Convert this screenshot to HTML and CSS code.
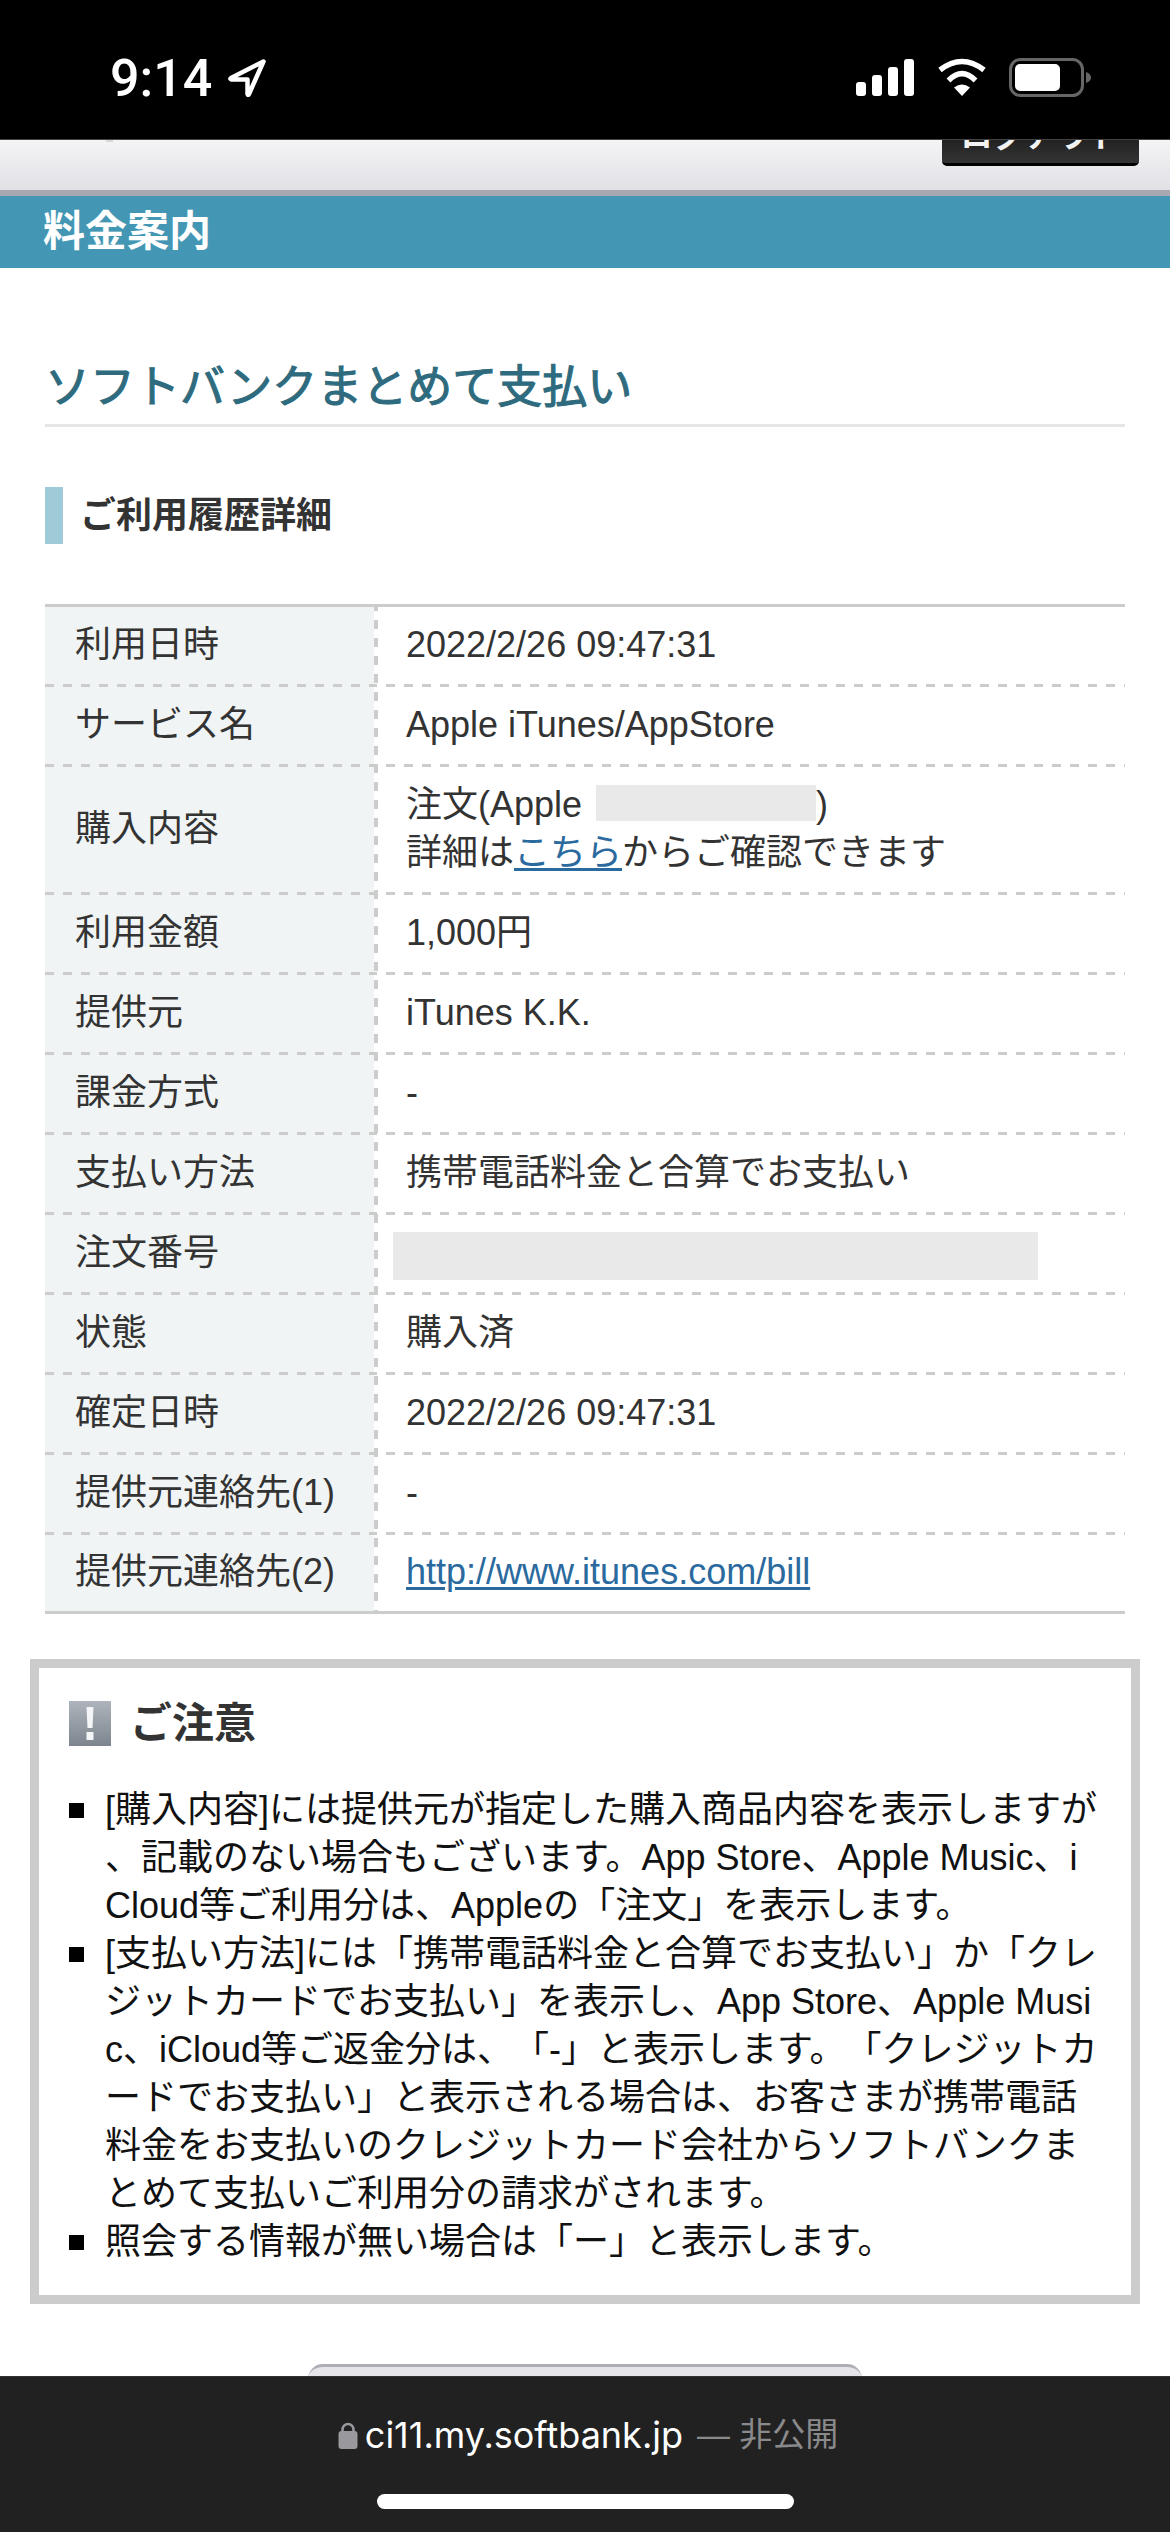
FILE: index.html
```html
<!DOCTYPE html>
<html lang="ja">
<head>
<meta charset="utf-8">
<title>料金案内</title>
<link rel="stylesheet" href="styles.css">
</head>
<body>
<div class="status">
  <div class="status-left">
    <span class="time">9:14</span>
    <svg class="loc" width="38" height="38" viewBox="0 0 38 38"><path d="M35.500 2.500 L3 19 Q1.500 20 3.500 20.500 L19.500 20.500 L19.500 35 Q20 37 21 35 Z" fill="none" stroke="#fff" stroke-width="4.500" stroke-linejoin="round"/></svg>
  </div>
  <svg class="status-icons" width="235" height="39" viewBox="0 0 235 39">
    <rect x="0" y="24" width="10" height="14" rx="3" fill="#fff"/>
    <rect x="16" y="17" width="10" height="21" rx="3" fill="#fff"/>
    <rect x="32" y="9" width="10" height="29" rx="3" fill="#fff"/>
    <rect x="48" y="1" width="10" height="37" rx="3" fill="#fff"/>
    <path d="M84 12 Q106 -5 128 12" fill="none" stroke="#fff" stroke-width="5.500"/>
    <path d="M92.500 22.500 Q106 9 119.500 22.500" fill="none" stroke="#fff" stroke-width="5.500"/>
    <path d="M106 38 L98 29.500 Q106 23.500 114 29.500 Z" fill="#fff"/>
    <rect x="154.500" y="1.500" width="72" height="36" rx="10" fill="none" stroke="#666" stroke-width="3"/>
    <rect x="159" y="6" width="45" height="27" rx="5" fill="#fff"/>
    <path d="M230 14 Q235 16 235 19.500 Q235 23 230 25 Z" fill="#666"/>
  </svg>
</div>

<header class="site-header">
  <span class="logo-tail"></span>
  <a class="logout">ログアウト</a>
</header>
<div class="band">料金案内</div>

<main class="content">
  <h1 class="page-title">ソフトバンクまとめて支払い</h1>
  <h2 class="section-title">ご利用履歴詳細</h2>

  <div class="detail">
    <div class="row"><div class="cell label">利用日時</div><div class="cell value">2022/2/26 09:47:31</div></div>
    <div class="row"><div class="cell label">サービス名</div><div class="cell value">Apple iTunes/AppStore</div></div>
    <div class="row"><div class="cell label">購入内容</div><div class="cell value"><div>注文(Apple <span class="redact-inline"></span>)<br>詳細は<a class="link">こちら</a>からご確認できます</div></div></div>
    <div class="row"><div class="cell label">利用金額</div><div class="cell value">1,000円</div></div>
    <div class="row"><div class="cell label">提供元</div><div class="cell value">iTunes K.K.</div></div>
    <div class="row"><div class="cell label">課金方式</div><div class="cell value">-</div></div>
    <div class="row"><div class="cell label">支払い方法</div><div class="cell value">携帯電話料金と合算でお支払い</div></div>
    <div class="row"><div class="cell label">注文番号</div><div class="cell value"><div class="redact-block"></div></div></div>
    <div class="row"><div class="cell label">状態</div><div class="cell value">購入済</div></div>
    <div class="row"><div class="cell label">確定日時</div><div class="cell value">2022/2/26 09:47:31</div></div>
    <div class="row"><div class="cell label">提供元連絡先(1)</div><div class="cell value">-</div></div>
    <div class="row"><div class="cell label">提供元連絡先(2)</div><div class="cell value"><a class="link">http://www.itunes.com/bill</a></div></div>
  </div>

  <section class="notice">
    <div class="notice-head">
      <svg width="42" height="45" viewBox="0 0 42 45">
        <defs><linearGradient id="ng" x1="0" y1="0" x2="0" y2="1"><stop offset="0" stop-color="#aeb4bb"/><stop offset="1" stop-color="#7c858e"/></linearGradient></defs>
        <rect width="42" height="45" fill="url(#ng)"/>
        <path d="M17.500 6 H24.500 L23.500 27 H18.500 Z" fill="#f4f5f6"/>
        <rect x="17.500" y="31" width="7" height="8" fill="#f4f5f6"/>
      </svg>
      <h3 class="notice-title">ご注意</h3>
    </div>
    <ul class="notice-list">
      <li><span>[購入内容]には提供元が指定した購入商品内容を表示しますが<br>、記載のない場合もございます。App Store、Apple Music、i<br>Cloud等ご利用分は、Appleの「注文」を表示します。</span></li>
      <li><span>[支払い方法]には「携帯電話料金と合算でお支払い」か「クレ<br>ジットカードでお支払い」を表示し、App Store、Apple Musi<br>c、iCloud等ご返金分は、「-」と表示します。「クレジットカ<br>ードでお支払い」と表示される場合は、お客さまが携帯電話<br>料金をお支払いのクレジットカード会社からソフトバンクま<br>とめて支払いご利用分の請求がされます。</span></li>
      <li><span>照会する情報が無い場合は「ー」と表示します。</span></li>
    </ul>
  </section>

  <div class="back-button"></div>
</main>

<footer class="browser-bar">
  <div class="url">
    <svg width="20" height="27" viewBox="0 0 20 27"><path d="M4.500 11 V7.500 a5.500 5.500 0 0 1 11 0 V11" fill="none" stroke="#98989d" stroke-width="2.600"/><rect x="0.500" y="9" width="19" height="18" rx="3" fill="#98989d"/></svg>
    <span class="host">ci11.my.softbank.jp</span>
    <span class="private">— 非公開</span>
  </div>
  <div class="home-indicator"></div>
</footer>
</body>
</html>
```
FILE: styles.css
```css
* { box-sizing: border-box; }
html, body { margin: 0; padding: 0; }
body {
  position: relative;
  width: 1170px;
  height: 2532px;
  overflow: hidden;
  background: #fff;
  color: #333;
  font-family: "Liberation Sans", "Noto Sans CJK JP", sans-serif;
  font-size: 36px;
  line-height: 48px;
  text-spacing-trim: space-all;
}
h1, h2, h3, ul { margin: 0; padding: 0; }

/* status bar */
.status {
  position: relative;
  z-index: 2;
  display: flex;
  justify-content: space-between;
  align-items: flex-start;
  height: 140px;
  padding: 58px 79px 0 110px;
  background: #000;
  border-bottom: 1px solid #444;
}
.status-left { display: flex; align-items: flex-start; gap: 16px; }
.time {
  margin-top: 1px;
  font-family: Roboto, sans-serif;
  font-weight: 500;
  font-size: 52px;
  line-height: 40px;
  color: #fff;
}
.loc { margin-top: 1px; }

/* site header */
.site-header {
  display: flex;
  justify-content: space-between;
  align-items: flex-end;
  height: 56px;
  padding: 0 31px 30px 106px;
  overflow: hidden;
  background: linear-gradient(#f4f4f6, #e1e1e6);
  background-size: 100% 50px;
  background-repeat: no-repeat;
  background-color: #a8a8b0;
}
.logo-tail {
  align-self: flex-start;
  width: 7px;
  height: 2px;
  background: #d8d8d8;
}
.logout {
  flex: none;
  width: 197px;
  height: 70px;
  padding-bottom: 11px;
  display: flex;
  align-items: flex-end;
  justify-content: center;
  background: linear-gradient(#000, #343434);
  border-bottom: 3px solid #000;
  border-radius: 0 0 5px 5px;
  color: #f2f2f2;
  font-weight: 700;
  font-size: 32px;
  line-height: 32px;
}
.band {
  height: 72px;
  padding-left: 43px;
  background: #4497b4;
  color: #fff;
  font-weight: 700;
  font-size: 42px;
  line-height: 72px;
}

/* content */
.content { padding: 90px 45px 0; }
.page-title {
  padding-bottom: 6px;
  border-bottom: 3px solid #e6e6e6;
  color: #2f6b7e;
  font-weight: 400;
  -webkit-text-stroke: 1.1px #2f6b7e;
  font-size: 45px;
  line-height: 60px;
}
.section-title {
  margin: 60px 0;
  height: 57px;
  padding-left: 17px;
  border-left: 18px solid #9fcad8;
  color: #333;
  font-weight: 700;
  font-size: 36px;
  line-height: 58px;
}

/* detail table */
.detail {
  border-top: 3px solid #ccc;
  border-bottom: 3px solid #ccc;
  background-image: repeating-linear-gradient(180deg, #ccc 0 4px, transparent 4px 13px, #ccc 13px 18px);
  background-size: 4px 100%;
  background-position: 329px 0;
  background-repeat: no-repeat;
}
.row {
  display: grid;
  grid-template-columns: 329px 1fr;
}
.cell {
  display: flex;
  align-items: center;
  padding-top: 13.5px;
  padding-bottom: 18.5px;
  background-position: left bottom;
  background-size: 100% 3px;
  background-repeat: no-repeat;
}
.label {
  padding-left: 30px;
  background-color: #f0f4f5;
  background-image: repeating-linear-gradient(90deg, #ccc 0 9px, transparent 9px 18px);
}
.value {
  padding-left: 32px;
  background-image: repeating-linear-gradient(90deg, #ccc 0 3px, transparent 3px 12px, #ccc 12px 18px);
}
.row:last-child .cell {
  padding-top: 13px;
  padding-bottom: 15px;
  background-image: none;
}
.link {
  color: #2a6a9e;
  text-decoration: underline;
  text-decoration-thickness: 3px;
  text-underline-offset: 3px;
}
.redact-inline {
  display: inline-block;
  width: 220px;
  height: 36px;
  margin-left: 4px;
  vertical-align: -4px;
  background: #e9e9e9;
}
.redact-block {
  width: 645px;
  height: 48px;
  margin: 3px 0 -3px -13px;
  background: #e9e9e9;
}

/* notice */
.notice {
  margin: 45px -15px 0;
  padding: 33px 30px 29px;
  border: 9px solid #ccc;
  color: #111;
}
.notice-head {
  display: flex;
  align-items: center;
  gap: 19px;
  height: 45px;
  margin-bottom: 40px;
}
.notice-title {
  color: #333;
  font-weight: 700;
  font-size: 42px;
  line-height: 45px;
}
.notice-list { list-style: none; }
.notice-list li {
  display: flex;
  gap: 21px;
  white-space: nowrap;
}
.notice-list li::before {
  content: "";
  flex: none;
  width: 15px;
  height: 15px;
  margin-top: 17px;
  background: #000;
}

/* button cut off by the browser bar */
.back-button {
  width: 554px;
  height: 90px;
  margin: 60px auto 0;
  border-top: 3px solid #aeaeb6;
  border-radius: 15px 15px 0 0;
  background: #e6e6ea;
}

/* browser bar */
.browser-bar {
  position: absolute;
  left: 0;
  right: 0;
  bottom: 0;
  height: 156px;
  padding-top: 34px;
  display: flex;
  flex-direction: column;
  align-items: center;
  background: #212121;
  border-top: 1px solid #333;
}
.url {
  display: flex;
  align-items: center;
  height: 48px;
  padding-left: 6px;
  font-family: Inter, sans-serif;
}
.host { margin-left: 7px; color: #fff; }
.private {
  margin-left: 14px;
  color: #8a8a8c;
  font-family: "Liberation Sans", "Noto Sans CJK JP", sans-serif;
  font-size: 33px;
}
.home-indicator {
  width: 417px;
  height: 15px;
  margin-top: 35px;
  border-radius: 8px;
  background: #fff;
}
```
